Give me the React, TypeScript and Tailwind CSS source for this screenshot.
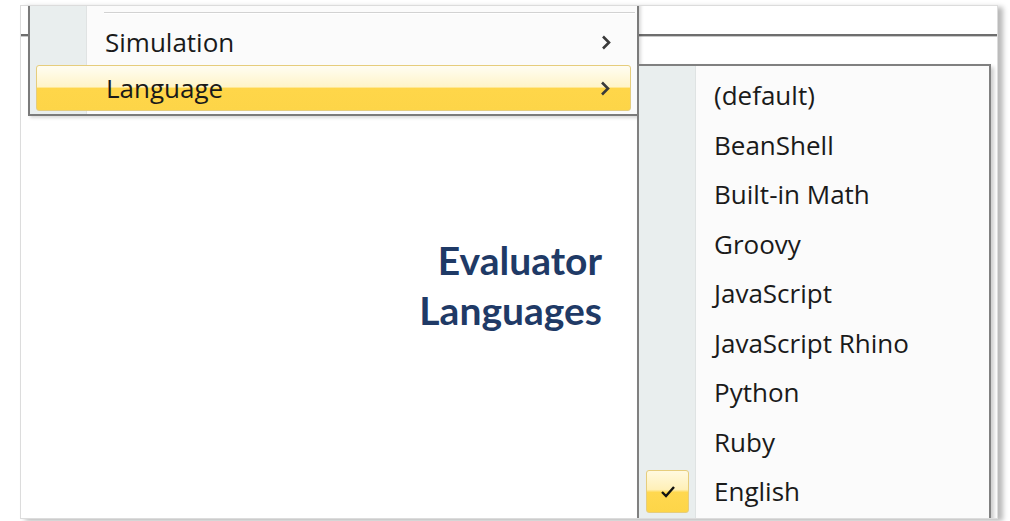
import React from "react";

const menuFont = { fontFamily: '"Open Sans", "Noto Sans", sans-serif' };

function Chevron() {
  return (
    <svg width="10" height="15" viewBox="0 0 10 15" className="shrink-0">
      <polyline points="2,1.5 8,7.5 2,13.5" fill="none" stroke="#3a3a3a" strokeWidth="2.6" />
    </svg>
  );
}

function Check() {
  return (
    <svg width="16" height="13" viewBox="0 0 16 13">
      <path d="M2 7 L6 11 L14 2" fill="none" stroke="#111" strokeWidth="2.4" />
    </svg>
  );
}

const languages = [
  "(default)",
  "BeanShell",
  "Built-in Math",
  "Groovy",
  "JavaScript",
  "JavaScript Rhino",
  "Python",
  "Ruby",
  "English",
];

export default function App() {
  return (
    <div className="w-[1010px] h-[521px] bg-white overflow-hidden" style={menuFont}>
      <div className="ml-[20px] mt-[5px] w-[978px] h-[514px] border-[1.5px] border-[#dcdcdc] bg-white relative shadow-[5px_2px_5px_rgba(0,0,0,0.28)]">
        <div className="w-full h-full overflow-hidden relative">
          {/* window body */}
          <div className="flex flex-col">
            <div className="h-[28px]" />
            <div className="h-[2px] bg-[#6e6e6e]" />
            <div className="h-[1px] bg-[#c8c8c8]" />
            <div
              className="mt-[198px] w-[581px] text-right text-[#1f3a66] font-bold text-[39px] leading-[50px]"
              style={{ fontFamily: 'Lato, "Open Sans", sans-serif' }}
            >
              <div>Evaluator</div>
              <div>Languages</div>
            </div>
          </div>

          {/* parent menu */}
          <div className="absolute left-[7px] top-[-12px] w-[611px] bg-[#fbfbfb] border-l-2 border-r-2 border-b-2 border-[#7b7b7b] shadow-[2px_2px_3px_rgba(0,0,0,0.15)]">
            <div className="absolute top-0 bottom-0 left-0 w-[57px] bg-[#e9eeee] border-r border-[#e0e3e3]" />
            <div className="relative flex flex-col pb-[3px]">
              <div className="h-[25px] flex items-end pl-[74px] pr-[2px]">
                <div className="w-full h-[2px] border-t border-[#d2d2d2] border-b border-b-white mb-[5px]" />
              </div>
              <div className="h-[46px] mx-[6px] flex items-center justify-between pl-[69px] pr-[20px] text-[26px] text-[#1a1a1a]">
                <span>Simulation</span>
                <Chevron />
              </div>
              <div className="h-[46px] mx-[6px] flex items-center justify-between pl-[69px] pr-[20px] text-[26px] text-[#1a1a1a] rounded-[3px] border border-[#e6cd7c] bg-[linear-gradient(to_bottom,#fffdf2_0%,#fff4c8_48%,#ffd649_50%,#fdd548_100%)]">
                <span>Language</span>
                <Chevron />
              </div>
            </div>
          </div>

          {/* language submenu */}
          <div className="absolute left-[616px] top-[58px] w-[354px] h-[470px] bg-[#fbfbfb] border-2 border-[#808080] shadow-[3px_3px_4px_rgba(0,0,0,0.2)]">
            <div className="absolute top-0 bottom-0 left-0 w-[57px] bg-[#e9eeee] border-r border-[#dfe3e3]" />
            <div className="relative flex flex-col pt-[5px]">
              {languages.map((name, i) => (
                <div key={name} className="h-[49.5px] flex items-center text-[26px] text-[#1a1a1a]">
                  <div className="w-[75px] shrink-0 flex items-center pl-[7px]">
                    {i === languages.length - 1 ? (
                      <div className="w-[43px] h-[43px] rounded-[3px] border border-[#e6cd7c] flex items-center justify-center bg-[linear-gradient(to_bottom,#fff9e0_0%,#fff0b8_45%,#ffd84f_52%,#fdd548_100%)]">
                        <Check />
                      </div>
                    ) : null}
                  </div>
                  <span>{name}</span>
                </div>
              ))}
            </div>
          </div>
        </div>
      </div>
    </div>
  );
}
